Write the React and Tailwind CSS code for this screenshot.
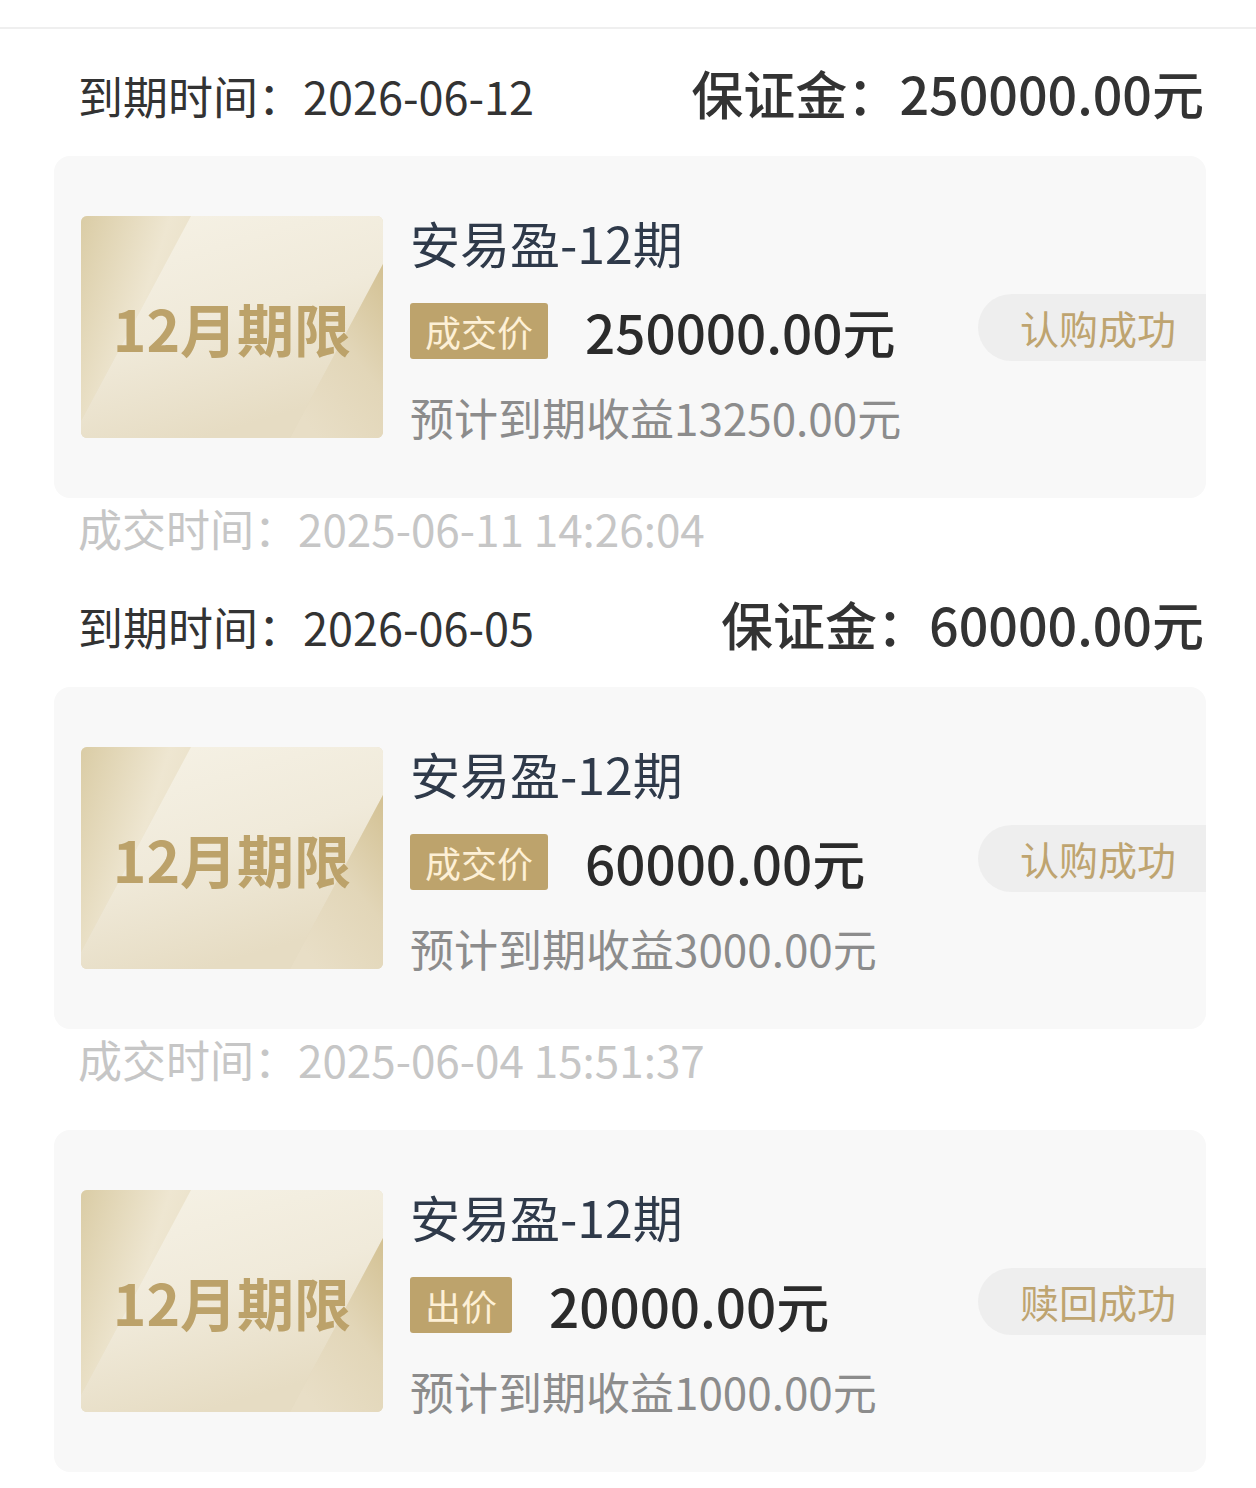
import React from "react";

const orders = [
  {
    due: "2026-06-12",
    deposit: "250000.00元",
    label: "成交价",
    price: "250000.00元",
    income: "13250.00元",
    status: "认购成功",
    time: "2025-06-11 14:26:04"
  },
  {
    due: "2026-06-05",
    deposit: "60000.00元",
    label: "成交价",
    price: "60000.00元",
    income: "3000.00元",
    status: "认购成功",
    time: "2025-06-04 15:51:37"
  },
  {
    label: "出价",
    price: "20000.00元",
    income: "1000.00元",
    status: "赎回成功"
  }
];

function Tile() {
  return (
    <div className="relative w-[302px] h-[222px] shrink-0 rounded-[6px] overflow-hidden">
      <svg className="absolute inset-0" width="302" height="222" viewBox="0 0 302 222">
        <defs>
          <linearGradient id="tb" x1="0" y1="0" x2="0.3" y2="1">
            <stop offset="0" stopColor="#ece3cb" />
            <stop offset="1" stopColor="#e3d8bd" />
          </linearGradient>
          <linearGradient id="tl" x1="0" y1="0" x2="1" y2="0.6">
            <stop offset="0" stopColor="#dacca5" />
            <stop offset="0.6" stopColor="#eee6d1" />
            <stop offset="1" stopColor="#e8dec4" />
          </linearGradient>
          <linearGradient id="mid" x1="0" y1="0" x2="0.4" y2="1">
            <stop offset="0" stopColor="#f6f2e6" />
            <stop offset="0.55" stopColor="#f0eada" />
            <stop offset="1" stopColor="#e6dcc3" />
          </linearGradient>
          <linearGradient id="rt" x1="1" y1="0" x2="0.3" y2="1">
            <stop offset="0" stopColor="#d3c193" />
            <stop offset="0.5" stopColor="#e2d6b8" />
            <stop offset="1" stopColor="#e8dec6" />
          </linearGradient>
        </defs>
        <rect width="302" height="222" fill="url(#tb)" />
        <polygon points="0,0 110,0 0,205" fill="url(#tl)" />
        <polygon points="110,0 302,0 302,48 209,222 0,222 0,205" fill="url(#mid)" />
        <polygon points="302,48 302,222 209,222" fill="url(#rt)" />
      </svg>
      <div className="relative h-full flex items-center justify-center text-[57px] font-bold leading-none text-[#bca26a]">
        12月期限
      </div>
    </div>
  );
}

function Card({ o }) {
  return (
    <div className="h-[342px] bg-[#f8f8f8] rounded-[16px] flex items-center pl-[27px]">
      <Tile />
      <div className="ml-[27px] flex-1 flex flex-col">
        <div className="text-[50px] leading-[54px] text-[#2f3a4a]">安易盈-12期</div>
        <div className="mt-[34px] flex items-center">
          <span className="h-[56px] px-[15px] flex items-center rounded-[3px] bg-[#bda36c] text-[36px] text-[#fdf0d6]">
            {o.label}
          </span>
          <span className="ml-[37px] text-[53px] font-medium text-[#2b2b2b] leading-none">{o.price}</span>
        </div>
        <div className="mt-[36px] text-[44px] leading-[44px] text-[#8c8c8c]">预计到期收益{o.income}</div>
      </div>
      <div className="h-[67px] pl-[42px] pr-[30px] flex items-center rounded-l-full bg-[#eeeeee] text-[39px] text-[#bea470]">
        {o.status}
      </div>
    </div>
  );
}

export default function App() {
  return (
    <div
      className="min-h-screen bg-white"
      style={{ fontFamily: '"Noto Sans CJK SC", "Noto Sans", sans-serif' }}
    >
      <div className="h-[27px]" />
      <div className="h-[2px] bg-[#efefef]" />
      <div className="pl-[54px] pr-[50px] pt-[39px] flex flex-col gap-[41px]">
        {orders.map((o, i) => (
          <div key={i}>
            {o.due && (
              <div className="h-[60px] mb-[28px] pl-[24px] pr-[2px] flex items-baseline justify-between">
                <span className="text-[45px] leading-[50px] text-[#333333]">到期时间：{o.due}</span>
                <span className="text-[52px] leading-[50px] font-medium text-[#333333]">保证金：{o.deposit}</span>
              </div>
            )}
            <Card o={o} />
            {o.time && (
              <div className="h-[60px] pl-[24px] text-[44px] leading-[60px] text-[#c6c6c6]">成交时间：{o.time}</div>
            )}
          </div>
        ))}
      </div>
    </div>
  );
}
